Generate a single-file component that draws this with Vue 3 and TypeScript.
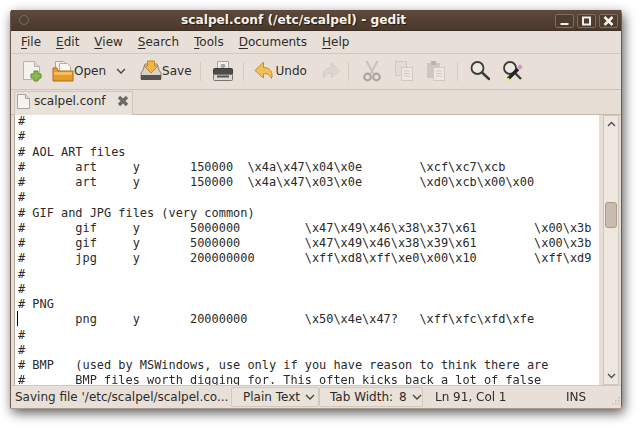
<script setup lang="ts">
const menus = [
  { key: 'F', rest: 'ile' },
  { key: 'E', rest: 'dit' },
  { key: 'V', rest: 'iew' },
  { key: 'S', rest: 'earch' },
  { key: 'T', rest: 'ools' },
  { key: 'D', rest: 'ocuments' },
  { key: 'H', rest: 'elp' },
]
const lines: string[] = [
  '#',
  '#',
  '# AOL ART files',
  '#       art     y       150000  \\x4a\\x47\\x04\\x0e        \\xcf\\xc7\\xcb',
  '#       art     y       150000  \\x4a\\x47\\x03\\x0e        \\xd0\\xcb\\x00\\x00',
  '#',
  '# GIF and JPG files (very common)',
  '#       gif     y       5000000         \\x47\\x49\\x46\\x38\\x37\\x61        \\x00\\x3b',
  '#       gif     y       5000000         \\x47\\x49\\x46\\x38\\x39\\x61        \\x00\\x3b',
  '#       jpg     y       200000000       \\xff\\xd8\\xff\\xe0\\x00\\x10        \\xff\\xd9',
  '#',
  '#',
  '# PNG',
  '        png     y       20000000        \\x50\\x4e\\x47?   \\xff\\xfc\\xfd\\xfe',
  '#',
  '#',
  '# BMP   (used by MSWindows, use only if you have reason to think there are',
  '#       BMP files worth digging for. This often kicks back a lot of false',
]
</script>

<template>
  <div class="page">
    <div class="window">
      <header class="titlebar">
        <span class="orb"></span>
        <span class="title">scalpel.conf (/etc/scalpel) - gedit</span>
        <div class="wbtns">
          <span class="wbtn"><svg width="17" height="12" viewBox="0 0 17 12"><rect x="4.500" y="8" width="8" height="2" fill="#f3eee8"/></svg></span>
          <span class="wbtn"><svg width="17" height="12" viewBox="0 0 17 12"><rect x="5" y="2.500" width="7" height="7" fill="none" stroke="#f3eee8" stroke-width="2"/></svg></span>
          <span class="wbtn"><svg width="17" height="12" viewBox="0 0 17 12"><path d="M4.500 2l8 8M12.500 2l-8 8" stroke="#f8f4ef" stroke-width="2.500"/></svg></span>
        </div>
      </header>

      <nav class="menubar">
        <span v-for="m in menus" :key="m.key" class="menu"><u>{{ m.key }}</u>{{ m.rest }}</span>
      </nav>

      <div class="toolbar">
        <svg class="ic new" width="22" height="22" viewBox="0 0 22 22">
          <path d="M2.500 1.500h11l5 5v13h-16z" fill="#f4f2ee" stroke="#b5b2aa"/>
          <path d="M13.500 1.500v5h5" fill="#dddad3" stroke="#b5b2aa"/>
          <path d="M13 11h4v3h3v4h-3v3h-4v-3h-3v-4h3z" fill="#8dbb4c" stroke="#5f8b2c"/>
        </svg>
        <svg class="ic open" width="22" height="22" viewBox="0 0 22 22">
          <path d="M3.500 1.500h8l3 3v6h-11z" fill="#f2f0ea" stroke="#aaa69c"/>
          <path d="M7.500 3.500h8l3 3v5h-11z" fill="#f7f6f1" stroke="#b3afa5"/>
          <path d="M1 8h4l1 3h15v10H1z" fill="#e89a2c" stroke="#b06d1d"/>
          <path d="M2 12h18v3H2z" fill="#f5bd5c"/>
        </svg>
        <span class="lbl">Open</span>
        <svg class="chev" width="10" height="6" viewBox="0 0 10 6"><path d="M1 1l4 4 4-4" fill="none" stroke="#45423d" stroke-width="1.300"/></svg>
        <svg class="ic save" width="22" height="22" viewBox="0 0 22 22">
          <path d="M3 10L5 4h12l2 6 2 3v6H1v-6z" fill="#d5d2cb" stroke="#85837d"/>
          <path d="M1 15h20v5H1z" fill="#55534f"/>
          <path d="M7.500 1h7v5h3.500l-7 7-7-7h3.500z" fill="#f0b83f" stroke="#c2862a"/>
        </svg>
        <span class="lbl">Save</span>
        <i class="sep s1"></i>
        <svg class="ic print" width="22" height="22" viewBox="0 0 22 22">
          <path d="M5.500 1.500h11v8h-11z" fill="#f1f0ec" stroke="#a6a49e"/>
          <path d="M9 4h4v2h1.500L11 8.500 7.500 6H9z" fill="#a8a6a0"/>
          <rect x="1.500" y="8.500" width="19" height="6" rx="1" fill="#4d4b48" stroke="#383734"/>
          <path d="M1.500 14.500h19v5a1 1 0 0 1-1 1h-17a1 1 0 0 1-1-1z" fill="#dcdad5" stroke="#76746e"/>
          <rect x="5" y="15.500" width="12" height="2" fill="#55534f"/>
        </svg>
        <i class="sep s2"></i>
        <svg class="ic undo" width="22" height="22" viewBox="0 0 22 22">
          <path d="M9.500 2L1 10.500l8.500 7.500v-4.500c3.500 0 6.500 1 8 5 2-6.500-1.500-11-8-11z" fill="#f3bf56" stroke="#c48d2c" stroke-linejoin="round"/>
        </svg>
        <span class="lbl">Undo</span>
        <svg class="ic redo" width="20" height="20" viewBox="0 0 22 22">
          <path d="M12.500 2L21 10.500 12.500 18v-4.500c-3.500 0-6.500 1-8 5-2-6.500 1.500-11 8-11z" fill="#dcd6cf" stroke="#cfc8c0" stroke-linejoin="round"/>
        </svg>
        <i class="sep s3"></i>
        <svg class="ic cut" width="18" height="22" viewBox="0 0 18 22">
          <path d="M3.500 1l7 13M14.500 1l-7 13" stroke="#c6c1ba" stroke-width="2"/>
          <circle cx="4.500" cy="17" r="3.300" fill="none" stroke="#aba69f" stroke-width="2.200"/>
          <circle cx="13.500" cy="17" r="3.300" fill="none" stroke="#aba69f" stroke-width="2.200"/>
        </svg>
        <svg class="ic copy" width="20" height="22" viewBox="0 0 20 22">
          <rect x="1.500" y="1.500" width="11" height="14" fill="#e2dcd5" stroke="#cfc9c1"/>
          <rect x="7.500" y="7.500" width="11" height="13" fill="#ece7e1" stroke="#cfc9c1"/>
          <path d="M10 11h6M10 13.500h6M10 16h6" stroke="#cfc9c1"/>
        </svg>
        <svg class="ic paste" width="20" height="22" viewBox="0 0 20 22">
          <rect x="1" y="3" width="13" height="15" fill="#cdc7bf"/>
          <rect x="5" y="1" width="5" height="4" fill="#b9b3ab"/>
          <rect x="7.500" y="7.500" width="11" height="13" fill="#ece7e1" stroke="#cfc9c1"/>
          <path d="M10 11h6M10 13.500h6M10 16h6" stroke="#cfc9c1"/>
        </svg>
        <i class="sep s4"></i>
        <svg class="ic find" width="22" height="22" viewBox="0 0 22 22">
          <circle cx="8.500" cy="8" r="6" fill="#ece8e3" stroke="#3c3b39" stroke-width="1.800"/>
          <path d="M13 12.500l7 6.500" stroke="#3c3b39" stroke-width="2.400" stroke-linecap="round"/>
        </svg>
        <svg class="ic repl" width="22" height="22" viewBox="0 0 22 22">
          <circle cx="8" cy="8" r="6" fill="#ece8e3" stroke="#3c3b39" stroke-width="1.800"/>
          <path d="M12 12l7 7" stroke="#3c3b39" stroke-width="2.400"/>
          <path d="M6 19L16 9" stroke="#262524" stroke-width="3.400"/>
          <rect x="16" y="5" width="4" height="4" transform="rotate(45 18 7)" fill="#d58fd0"/>
          <circle cx="6" cy="19.500" r="1.800" fill="#ece66a"/>
        </svg>
      </div>

      <div class="tabstrip">
        <div class="tab">
          <svg width="13" height="15" viewBox="0 0 13 15"><path d="M.5.500h8l4 4v10H.5z" fill="#f5f3ef" stroke="#a8a59e"/><path d="M8.500.500v4h4" fill="#dcd9d2" stroke="#a8a59e"/></svg>
          <span class="tabname">scalpel.conf</span>
          <svg class="tabx" width="12" height="12" viewBox="0 0 12 12"><path d="M2 2l8 8M10 2l-8 8" stroke="#6d6a66" stroke-width="3.400"/></svg>
        </div>
      </div>

      <div class="editor">
        <div class="textarea">
          <i class="caret"></i>
          <div v-for="(l, i) in lines" :key="i" class="line">{{ l }}</div>
        </div>
        <div class="scrollbar">
          <svg class="arr" width="9" height="6" viewBox="0 0 9 6"><path d="M1 5l3.500-3.500L8 5" fill="none" stroke="#4c4a46" stroke-width="1.300"/></svg>
          <div class="track"><div class="thumb"></div></div>
          <svg class="arr" width="9" height="6" viewBox="0 0 9 6"><path d="M1 1l3.500 3.500L8 1" fill="none" stroke="#4c4a46" stroke-width="1.300"/></svg>
        </div>
      </div>

      <footer class="statusbar">
        <span class="st msg">Saving file '/etc/scalpel/scalpel.co...</span>
        <span class="st btn plain">Plain Text<svg width="10" height="6" viewBox="0 0 10 6"><path d="M1 1l4 4 4-4" fill="none" stroke="#45423d" stroke-width="1.300"/></svg></span>
        <span class="st btn tabw">Tab Width:<span class="num">8</span><svg width="10" height="6" viewBox="0 0 10 6"><path d="M1 1l4 4 4-4" fill="none" stroke="#45423d" stroke-width="1.300"/></svg></span>
        <span class="st pos">Ln 91, Col 1</span>
        <span class="st ins">INS</span>
        <svg class="grip" width="10" height="10" viewBox="0 0 10 10" fill="#c9bdb0"><rect x="7" y="1" width="1.500" height="1.500"/><rect x="4" y="4" width="1.500" height="1.500"/><rect x="7" y="4" width="1.500" height="1.500"/><rect x="1" y="7" width="1.500" height="1.500"/><rect x="4" y="7" width="1.500" height="1.500"/><rect x="7" y="7" width="1.500" height="1.500"/></svg>
      </footer>
    </div>
  </div>
</template>

<style scoped>
.page {
  width: 640px;
  height: 428px;
  padding: 10px 0 0 10px;
  box-sizing: border-box;
  background: #fff;
  overflow: hidden;
}
.window {
  width: 612px;
  height: 399px;
  display: flex;
  flex-direction: column;
  position: relative;
  background: #e6ddd4;
  border-radius: 3px 3px 2px 2px;
  box-shadow: 2px 4px 12px rgba(0, 0, 0, 0.65);
  border: 1px solid #6d5a4a;
  border-top: 0;
  border-bottom: 1px solid #a89a8c;
  box-sizing: border-box;
  font-family: "DejaVu Sans", sans-serif;
  font-size: 12px;
  color: #2e2c28;
  filter: blur(0.25px);
}
.window::before,
.window::after {
  content: "";
  position: absolute;
  right: -1px;
  width: 3px;
  height: 3px;
  background: #e59a2e;
}
.window::before { top: 0; clip-path: polygon(0 0, 100% 0, 100% 100%); }
.window::after { bottom: -1px; clip-path: polygon(100% 0, 100% 100%, 0 100%); }
.titlebar {
  height: 20px;
  flex: none;
  display: flex;
  align-items: center;
  background: linear-gradient(#5f4a3c, #4a382c);
  border-bottom: 1px solid #3e2f25;
  position: relative;
}
.orb {
  width: 8px;
  height: 8px;
  margin-left: 8px;
  border-radius: 50%;
  background: #4f4238;
  border: 1px solid #7a6b5f;
}
.title {
  position: absolute;
  left: 170px;
  top: 3px;
  font-size: 12.2px;
  font-weight: 700;
  color: #f6f2ec;
  text-shadow: 1px 1px 1px #231a13;
  white-space: nowrap;
}
.wbtns {
  margin-left: auto;
  margin-right: 3px;
  margin-top: 1px;
  display: flex;
  gap: 3px;
}
.wbtn {
  width: 19px;
  height: 14px;
  box-sizing: border-box;
  border: 1px solid #7f6c5e;
  border-radius: 2px;
  background: #4e3c30;
  display: flex;
}
.menubar {
  height: 22px;
  flex: none;
  display: flex;
  align-items: center;
  padding-left: 10px;
  gap: 15px;
  border-bottom: 1px solid #d3c7bb;
  background: #e8e0d8;
}
.menu u { text-underline-offset: 2px; text-decoration-thickness: 1px; }
.toolbar {
  height: 36px;
  flex: none;
  display: flex;
  align-items: center;
  padding: 0 0 1px 10px;
  border-bottom: 1px solid #cfc2b5;
  box-sizing: border-box;
  background: #e8e0d8;
}
.ic { flex: none; }
.open { margin-left: 9px; }
.lbl { white-space: nowrap; }
.chev { margin-left: 10px; flex: none; }
.save { margin-left: 14px; }
.sep { width: 1px; height: 19px; background: #d4cabf; flex: none; }
.s1 { margin-left: 8px; }
.print { margin-left: 11px; }
.s2 { margin-left: 9px; }
.undo { margin-left: 10px; }
.redo { margin-left: 13px; }
.s3 { margin-left: 8px; }
.cut { margin-left: 14px; }
.copy { margin-left: 13px; }
.paste { margin-left: 12px; }
.s4 { margin-left: 11px; }
.find { margin-left: 11px; }
.repl { margin-left: 11px; }
.tabstrip {
  height: 25px;
  flex: none;
  display: flex;
  padding-left: 3px;
  align-items: flex-end;
  background: #e6ddd4;
  border-bottom: 1px solid #c6b9ac;
  box-sizing: border-box;
}
.tab {
  height: 24px;
  width: 119px;
  box-sizing: border-box;
  display: flex;
  align-items: center;
  padding: 0 0 5px 2px;
  gap: 4px;
  background: #e9e2da;
  border: 1px solid #d0c5ba;
  border-bottom: 0;
  border-radius: 2px 2px 0 0;
  margin-bottom: -1px;
}
.tabx { margin-left: 8px; }
.editor {
  flex: 1;
  min-height: 0;
  display: flex;
  padding: 0 2px 0 3px;
}
.textarea {
  flex: 1;
  min-width: 0;
  background: #fff;
  border-left: 1px solid #b3a99e;
  overflow: hidden;
  padding: 0 0 0 3px;
  font-family: "DejaVu Sans Mono", monospace;
  font-size: 11.92px;
  line-height: 15.25px;
  color: #2a2a2a;
  position: relative;
}
.line { white-space: pre; height: 15.25px; transform: translateY(-1px); }
.caret {
  position: absolute;
  left: 2px;
  top: 196px;
  width: 1px;
  height: 15px;
  background: #000;
}
.scrollbar {
  width: 16px;
  margin-left: 4px;
  flex: none;
  display: flex;
  flex-direction: column;
  align-items: center;
  background: #ede7e0;
  border: 1px solid #cfc5ba;
  box-sizing: border-box;
  padding: 5px 0;
}
.track { flex: 1; width: 100%; padding-top: 75px; box-sizing: border-box; }
.thumb {
  width: 12px;
  height: 26px;
  margin: 0 auto;
  border-radius: 3px;
  background: #c9bcae;
  border: 1px solid #a99b8c;
  box-sizing: border-box;
}
.statusbar {
  height: 23px;
  flex: none;
  display: flex;
  align-items: center;
  padding: 0 0 1px 4px;
  border-top: 1px solid #d1c6bb;
  box-sizing: border-box;
  background: #e8e0d8;
}
.st { white-space: nowrap; display: flex; align-items: center; }
.msg { width: 216px; }
.btn {
  height: 20px;
  border: 1px solid #d3c8bd;
  border-radius: 2px;
  box-sizing: border-box;
  background: #e9e2da;
}
.btn svg { margin-left: 5px; }
.num { margin-left: 6px; }
.plain { width: 88px; padding-left: 11px; }
.tabw { width: 104px; padding-left: 10px; }
.pos { margin-left: 12px; width: 131px; }
.grip { margin: 8px 0 0 auto; flex: none; }
</style>

<style>
html, body { margin: 0; background: #fff; }
</style>
